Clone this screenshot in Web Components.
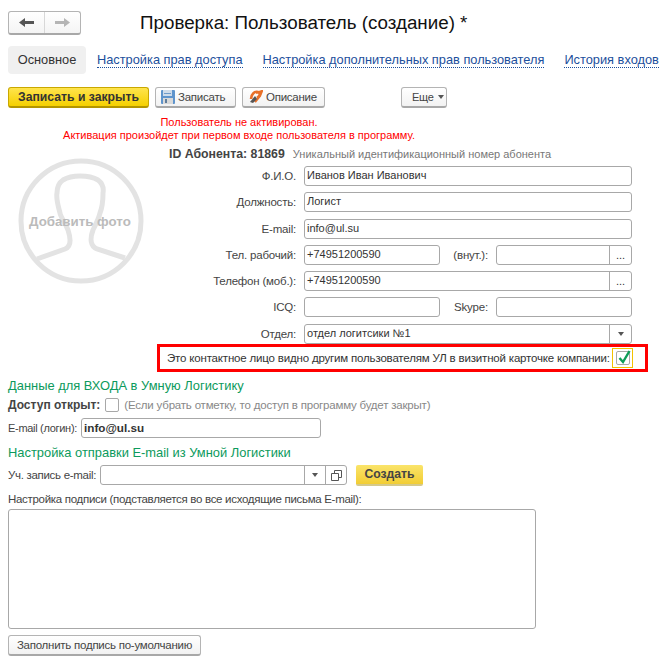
<!DOCTYPE html>
<html lang="ru">
<head>
<meta charset="utf-8">
<style>
  html, body { margin: 0; background: #fff; }
  body { font: 11.5px "Liberation Sans", Arial, sans-serif; letter-spacing: -.2px; color: #333; width: 669px; height: 663px; overflow: hidden; }
</style>
</head>
<body>
<ul-user-form></ul-user-form>
<script>
const arrow = d => `<svg width="15" height="11" viewBox="0 0 15 11"><path d="${d}"/></svg>`;

class UlNav extends HTMLElement {
    constructor() {
        super();
        this.attachShadow({ mode: 'open' }).innerHTML = `
            <style>
                :host { display: inline-flex; width: 73px; height: 24px; box-sizing: border-box; border: 1px solid #b4b4b4; border-bottom: 2px solid #a8a8a8; border-radius: 3px; background: linear-gradient(#fff, #f4f4f4); }
                div { flex: 1; display: flex; align-items: center; justify-content: center; }
                div + div { border-left: 1px solid #d8d8d8; }
                .back { fill: #555; }
                .next { fill: #b5b5b5; }
            </style>
            <div class="back">${arrow('M0 5.5 L6 1 V4 H15 V7 H6 V10 Z')}</div>
            <div class="next">${arrow('M15 5.5 L9 1 V4 H0 V7 H9 V10 Z')}</div>
        `;
    }
}

class UlButton extends HTMLElement {
    constructor() {
        super();
        this.attachShadow({ mode: 'open' }).innerHTML = `
            <style>
                :host { display: inline-flex; align-items: center; justify-content: center; gap: 3px; box-sizing: border-box; height: 21px; padding: 0 4px; border: 1px solid #b4b4b4; border-bottom: 2px solid #a8a8a8; border-radius: 3px; background: linear-gradient(#fff, #f2f2f2); color: #444; font-size: 11.5px; letter-spacing: -.25px; white-space: nowrap; }
                :host([icon]) { justify-content: flex-start; padding-left: 5px; }
                :host([primary]) { border-color: #c9a800; border-bottom-color: #b39500; background: linear-gradient(#ffe44d, #f5d000); color: #333; font-weight: bold; font-size: 12.2px; letter-spacing: 0; }
                :host([flat]) { border: 0; border-bottom: 2px solid #d5c98a; border-radius: 2px; background: linear-gradient(#fae46a, #f2cd34); color: #444; font-weight: bold; font-size: 12.2px; letter-spacing: 0; }
            </style>
            <slot></slot>
        `;
    }
}

class UlInput extends HTMLElement {
    static get observedAttributes() { return ['value']; }

    constructor() {
        super();
        this.attachShadow({ mode: 'open' }).innerHTML = `
            <style>
                :host { display: flex; box-sizing: border-box; height: 20px; border: 1px solid #a8a8a8; border-radius: 3px; background: #fff; color: #333; font-size: 11px; letter-spacing: 0; overflow: hidden; }
                :host([strong]) { font-weight: bold; font-size: 11.7px; color: #333; }
                .text { flex: 1; padding: 0 2px; line-height: 17px; white-space: nowrap; }
                ::slotted(*) { flex: none; width: 22px; box-sizing: border-box; border-left: 1px solid #a8a8a8; display: flex; align-items: center; justify-content: center; }
            </style>
            <div class="text"></div>
            <slot></slot>
        `;
    }

    attributeChangedCallback(name, oldValue, newValue) {
        this.shadowRoot.querySelector('.text').textContent = newValue;
    }
}

class UlUserForm extends HTMLElement {
    constructor() {
        super();
        this.attachShadow({ mode: 'open' }).innerHTML = `
            <style>
                :host { display: block; position: relative; width: 669px; height: 663px; overflow: hidden; }
                a { color: #1c4f9c; border-bottom: 1px dotted #1c4f9c; line-height: 14px; white-space: nowrap; }
                header { display: flex; align-items: center; padding: 11px 0 0 8px; height: 24px; letter-spacing: 0; }
                h1 { margin: 0 0 0 59px; font-size: 18.8px; font-weight: normal; color: #111; white-space: nowrap; }
                .tabs { display: flex; align-items: center; height: 28px; margin-top: 11px; padding-left: 8px; font-size: 12.8px; letter-spacing: 0; white-space: nowrap; }
                .tab-on { width: 78px; height: 28px; line-height: 28px; text-align: center; background: #f0f0f0; border-radius: 4px; color: #333; margin-right: 11px; }
                .tabs a:nth-child(3) { margin-left: 20px; }
                .tabs a:nth-child(4) { margin-left: 20px; }
                .bar { display: flex; height: 21px; margin-top: 13px; padding-left: 8px; gap: 6px; }
                .bar .more { margin-left: 70px; padding-left: 10px; gap: 4px; justify-content: flex-start; font-size: 11px; }
                .caret { width: 0; height: 0; border: 3px solid transparent; border-top: 4px solid #555; border-bottom: 0; }
                .msg { margin-top: 8px; width: 478px; text-align: center; color: #f00; font-size: 11px; letter-spacing: 0; line-height: 13px; white-space: nowrap; }
                .id { margin: 5px 0 0 169px; line-height: 14px; white-space: nowrap; color: #777; font-size: 11px; letter-spacing: 0; }
                .id b { color: #444; font-size: 12.3px; margin-right: 5px; }
                .upper { display: flex; margin-top: 5px; }
                .photo { flex: none; width: 158px; position: relative; }
                .photo svg { position: absolute; left: 18px; top: -8px; }
                .photo span { position: absolute; left: 29px; top: 48px; font-size: 13.3px; letter-spacing: 0; font-weight: bold; color: #bbb; white-space: nowrap; }
                .grid { display: grid; grid-template-columns: 146px 136px 56px 136px; grid-auto-rows: 20px; row-gap: 6.25px; align-items: center; }
                .grid label { text-align: right; padding-right: 8px; color: #444; white-space: nowrap; }
                .wide { grid-column: 2 / span 3; }
                .check-row { display: flex; align-items: center; box-sizing: border-box; width: 491px; height: 28px; margin: .5px 0 0 157px; padding-left: 7px; border: 3px solid #f00; white-space: nowrap; color: #333; letter-spacing: -.18px; }
                .check-row > span:first-child { width: 443px; }
                .check-row .on { display: flex; align-items: center; justify-content: center; box-sizing: border-box; width: 21px; height: 20px; margin-left: 2px; border: 1px solid #f2c200; }
                .box { display: inline-block; position: relative; box-sizing: border-box; width: 14px; height: 14px; border: 1px solid #a8a8a8; border-radius: 2px; background: #fff; }
                .box svg { position: absolute; left: 0; top: -3px; }
                h2 { margin: 0; padding-left: 8px; font-size: 12.9px; letter-spacing: 0; font-weight: normal; color: #0c9a5c; line-height: 16px; white-space: nowrap; }
                .line { display: flex; align-items: center; padding-left: 8px; white-space: nowrap; color: #444; }
                .line b { font-size: 12px; letter-spacing: 0; }
                .note { color: #888; }
                .label-fixed { flex: none; width: 69px; }
                .tight { letter-spacing: -.3px; }
                textarea-box { display: block; box-sizing: border-box; width: 528px; height: 120px; margin: 3px 0 0 8px; border: 1px solid #a8a8a8; border-radius: 3px; }
            </style>
            <header><ul-nav></ul-nav><h1>Проверка: Пользователь (создание) *</h1></header>
            <div class="tabs">
                <span class="tab-on">Основное</span>
                <a>Настройка прав доступа</a>
                <a>Настройка дополнительных прав пользователя</a>
                <a>История входов</a>
            </div>
            <div class="bar">
                <ul-button primary style="width:141px">Записать и закрыть</ul-button>
                <ul-button icon style="width:81px">
                    <svg width="14" height="14" viewBox="0 0 14 14"><rect width="14" height="14" rx="1" fill="#5f94cc"/><rect x="2" y="0" width="9" height="6" fill="#cfdcea"/><rect x="3" y="3" width="7" height="1" fill="#6f9bc9"/><rect x="2" y="8" width="10" height="6" fill="#d9d9d9"/><rect x="4" y="9" width="2" height="4" fill="#5f7d9c"/></svg>
                    Записать</ul-button>
                <ul-button icon style="width:83px;padding-left:6px">
                    <svg width="14" height="14" viewBox="0 0 14 14" fill="none"><path d="M2 9 C2 4 6 1 9 2 C12 3 11 6 8 8" stroke="#e8702a" stroke-width="2.6"/><path d="M7 3 L13 1 L11 6 L6 12" stroke="#e8702a" stroke-width="2.2"/><path d="M1 12 L6 6 L8 9 L4 13 Z" fill="#555"/></svg>
                    Описание</ul-button>
                <ul-button class="more" style="width:46px">Еще <span class="caret"></span></ul-button>
            </div>
            <div class="msg">Пользователь не активирован.<br>Активация произойдет при первом входе пользователя в программу.</div>
            <div class="id"><b>ID Абонента: 81869</b> Уникальный идентификационный номер абонента</div>
            <div class="upper">
                <div class="photo">
                    <svg width="126" height="126" viewBox="0 0 126 126" fill="none" stroke="#e3e3e3" stroke-width="5">
                        <circle cx="63" cy="63" r="60"/>
                        <path d="M19 101 L47 91 C52 89 54 84 50 72 C46 62 42 58 42 55 C40 48 38 40 39 35 C39 28 42 24 45 22 C50 19 56 18 62 18 C68 18 75 19 80 22 C84 25 86 29 85 35 C85 42 84 50 82 55 C81 60 78 66 75 72 C72 80 72 88 79 91 L107 100"/>
                    </svg>
                    <span>Добавить фото</span>
                </div>
                <div class="grid">
                    <label>Ф.И.О.</label><ul-input class="wide" value="Иванов Иван Иванович"></ul-input>
                    <label>Должность:</label><ul-input class="wide" value="Логист"></ul-input>
                    <label>E-mail:</label><ul-input class="wide" value="info@ul.su"></ul-input>
                    <label>Тел. рабочий:</label><ul-input value="+74951200590"></ul-input>
                    <label>(внут.):</label><ul-input value=""><span>...</span></ul-input>
                    <label>Телефон (моб.):</label><ul-input class="wide" value="+74951200590"><span>...</span></ul-input>
                    <label>ICQ:</label><ul-input value=""></ul-input>
                    <label>Skype:</label><ul-input value=""></ul-input>
                    <label>Отдел:</label><ul-input class="wide" value="отдел логитсики №1"><span><i class="caret"></i></span></ul-input>
                </div>
            </div>
            <div class="check-row"><span>Это контактное лицо видно другим пользователям УЛ в визитной карточке компании:</span>
                <span class="on"><span class="box"><svg width="14" height="16" viewBox="0 0 14 16"><path d="M2.5 9 L6 13 L12.5 2" fill="none" stroke="#0f9d58" stroke-width="2.4"/></svg></span></span>
            </div>
            <h2 style="margin-top:6px">Данные для ВХОДА в Умную Логистику</h2>
            <div class="line" style="margin-top:4px;height:14px;gap:5px"><b>Доступ открыт:</b><span class="box"></span><span class="note">(Если убрать отметку, то доступ в программу будет закрыт)</span></div>
            <div class="line" style="margin-top:6px;height:20px;gap:4px"><span class="label-fixed tight" style="font-size:11px">E-mail (логин):</span><ul-input strong value="info@ul.su" style="width:240px"></ul-input></div>
            <h2 style="margin-top:7px">Настройка отправки E-mail из Умной Логистики</h2>
            <div class="line" style="margin-top:4px;height:20px;gap:4px"><span class="label-fixed tight" style="width:88px">Уч. запись e-mail:</span>
                <ul-input value="" style="width:247px"><span style="width:21px"><i class="caret"></i></span><span style="width:21px"><svg width="11" height="11" viewBox="0 0 11 11" fill="none" stroke="#555"><path d="M3.5 3.5 V.5 H10.5 V7.5 H7.5 M.5 3.5 H7.5 V10.5 H.5 Z"/></svg></span></ul-input>
                <ul-button flat style="width:67px;margin-left:5px">Создать</ul-button>
            </div>
            <div class="line tight" style="margin-top:7px;height:14px">Настройка подписи (подставляется во все исходящие письма E-mail):</div>
            <textarea-box></textarea-box>
            <ul-button style="width:193px;margin:6px 0 0 8px">Заполнить подпись по-умолчанию</ul-button>
        `;
    }
}

customElements.define('ul-nav', UlNav);
customElements.define('ul-button', UlButton);
customElements.define('ul-input', UlInput);
customElements.define('ul-user-form', UlUserForm);
</script>
</body>
</html>
